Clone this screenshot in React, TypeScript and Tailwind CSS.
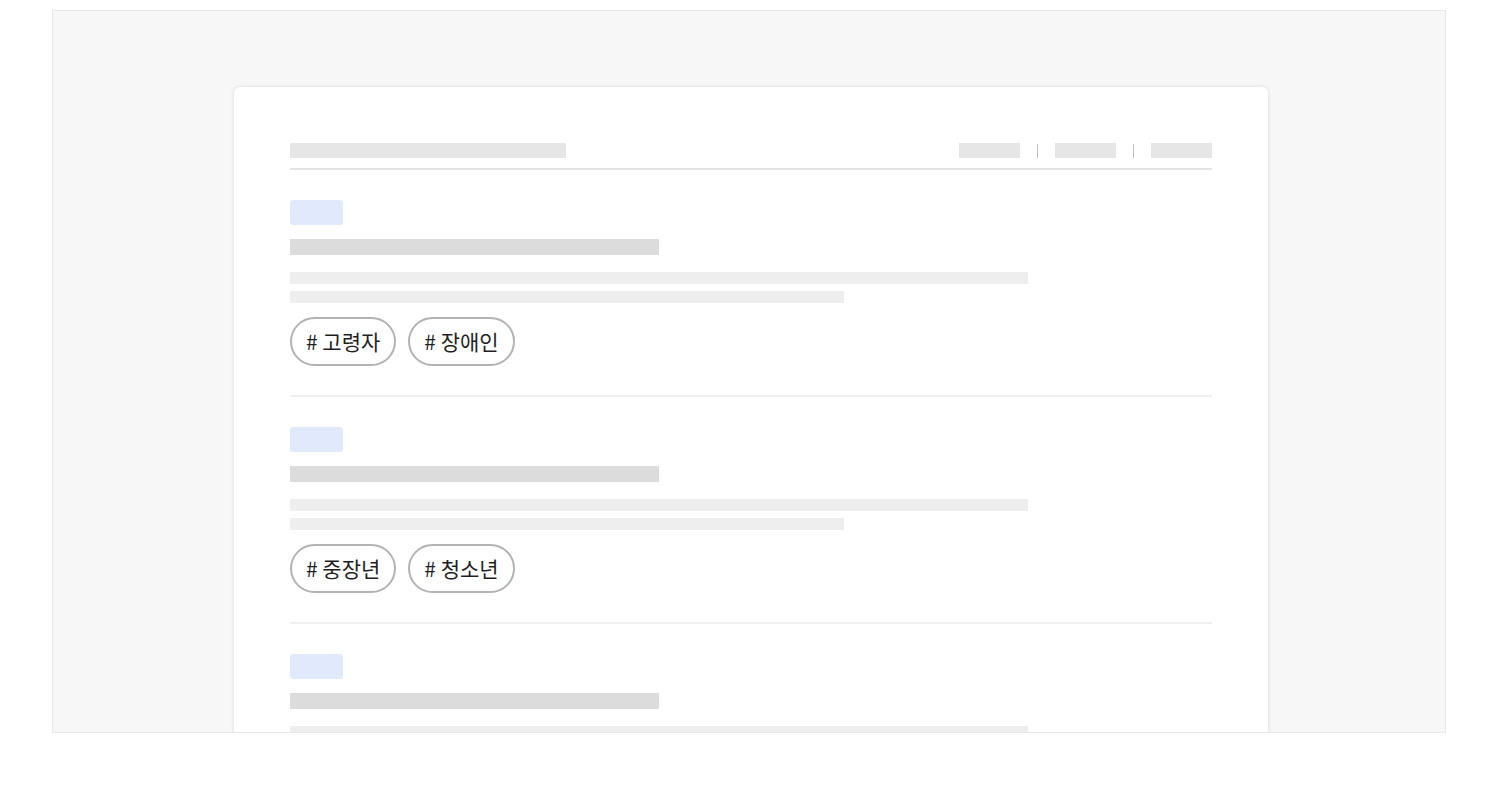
import React from 'react';

const items = [
  { tags: ['고령자', '장애인'] },
  { tags: ['중장년', '청소년'] },
  { tags: ['고령자', '장애인'] },
];

const App: React.FC = () => {
  return (
    <div className="w-[1498px] h-[789px] bg-white pt-[10px] pl-[52px]" style={{ fontFamily: '"Noto Sans CJK KR", "Noto Sans", sans-serif' }}>
      <div className="w-[1394px] h-[723px] bg-[#f7f7f7] border border-[#e8e8e8] overflow-hidden pt-[76px] pl-[181px]">
        <div className="w-[1034px] bg-white rounded-[6px] shadow-[0_0_4px_rgba(0,0,0,0.12)] px-[56px] pt-[56px] pb-[40px]">
          {/* Header */}
          <div className="flex items-center justify-between pb-[10px] border-b-2 border-[#e3e3e3]">
            <div className="w-[276px] h-[15px] bg-[#e6e6e6]" />
            <div className="flex items-center gap-[17px]">
              <div className="w-[61px] h-[15px] bg-[#e6e6e6]" />
              <div className="w-px h-[14px] bg-[#bdbdbd]" />
              <div className="w-[61px] h-[15px] bg-[#e6e6e6]" />
              <div className="w-px h-[14px] bg-[#bdbdbd]" />
              <div className="w-[61px] h-[15px] bg-[#e6e6e6]" />
            </div>
          </div>

          {/* List */}
          {items.map((item, i) => (
            <div key={i} className="pt-[30px] pb-[29px] border-b-2 border-[#f0f0f0]">
              <div className="w-[53px] h-[25px] rounded-[3px] bg-[#e1e9fd]" />
              <div className="mt-[14px] w-[369px] h-[16px] bg-[#dcdcdc]" />
              <div className="mt-[17px] w-[738px] h-[12px] bg-[#eeeeee]" />
              <div className="mt-[7px] w-[554px] h-[12px] bg-[#eeeeee]" />
              <div className="mt-[14px] flex gap-[12px]">
                {item.tags.map((t) => (
                  <span
                    key={t}
                    className="h-[49px] px-[14px] flex items-center rounded-full border-2 border-[#b3b3b3] text-[21px] text-[#1f1f1f]"
                  >
                    # {t}
                  </span>
                ))}
              </div>
            </div>
          ))}
        </div>
      </div>
    </div>
  );
};

export default App;
